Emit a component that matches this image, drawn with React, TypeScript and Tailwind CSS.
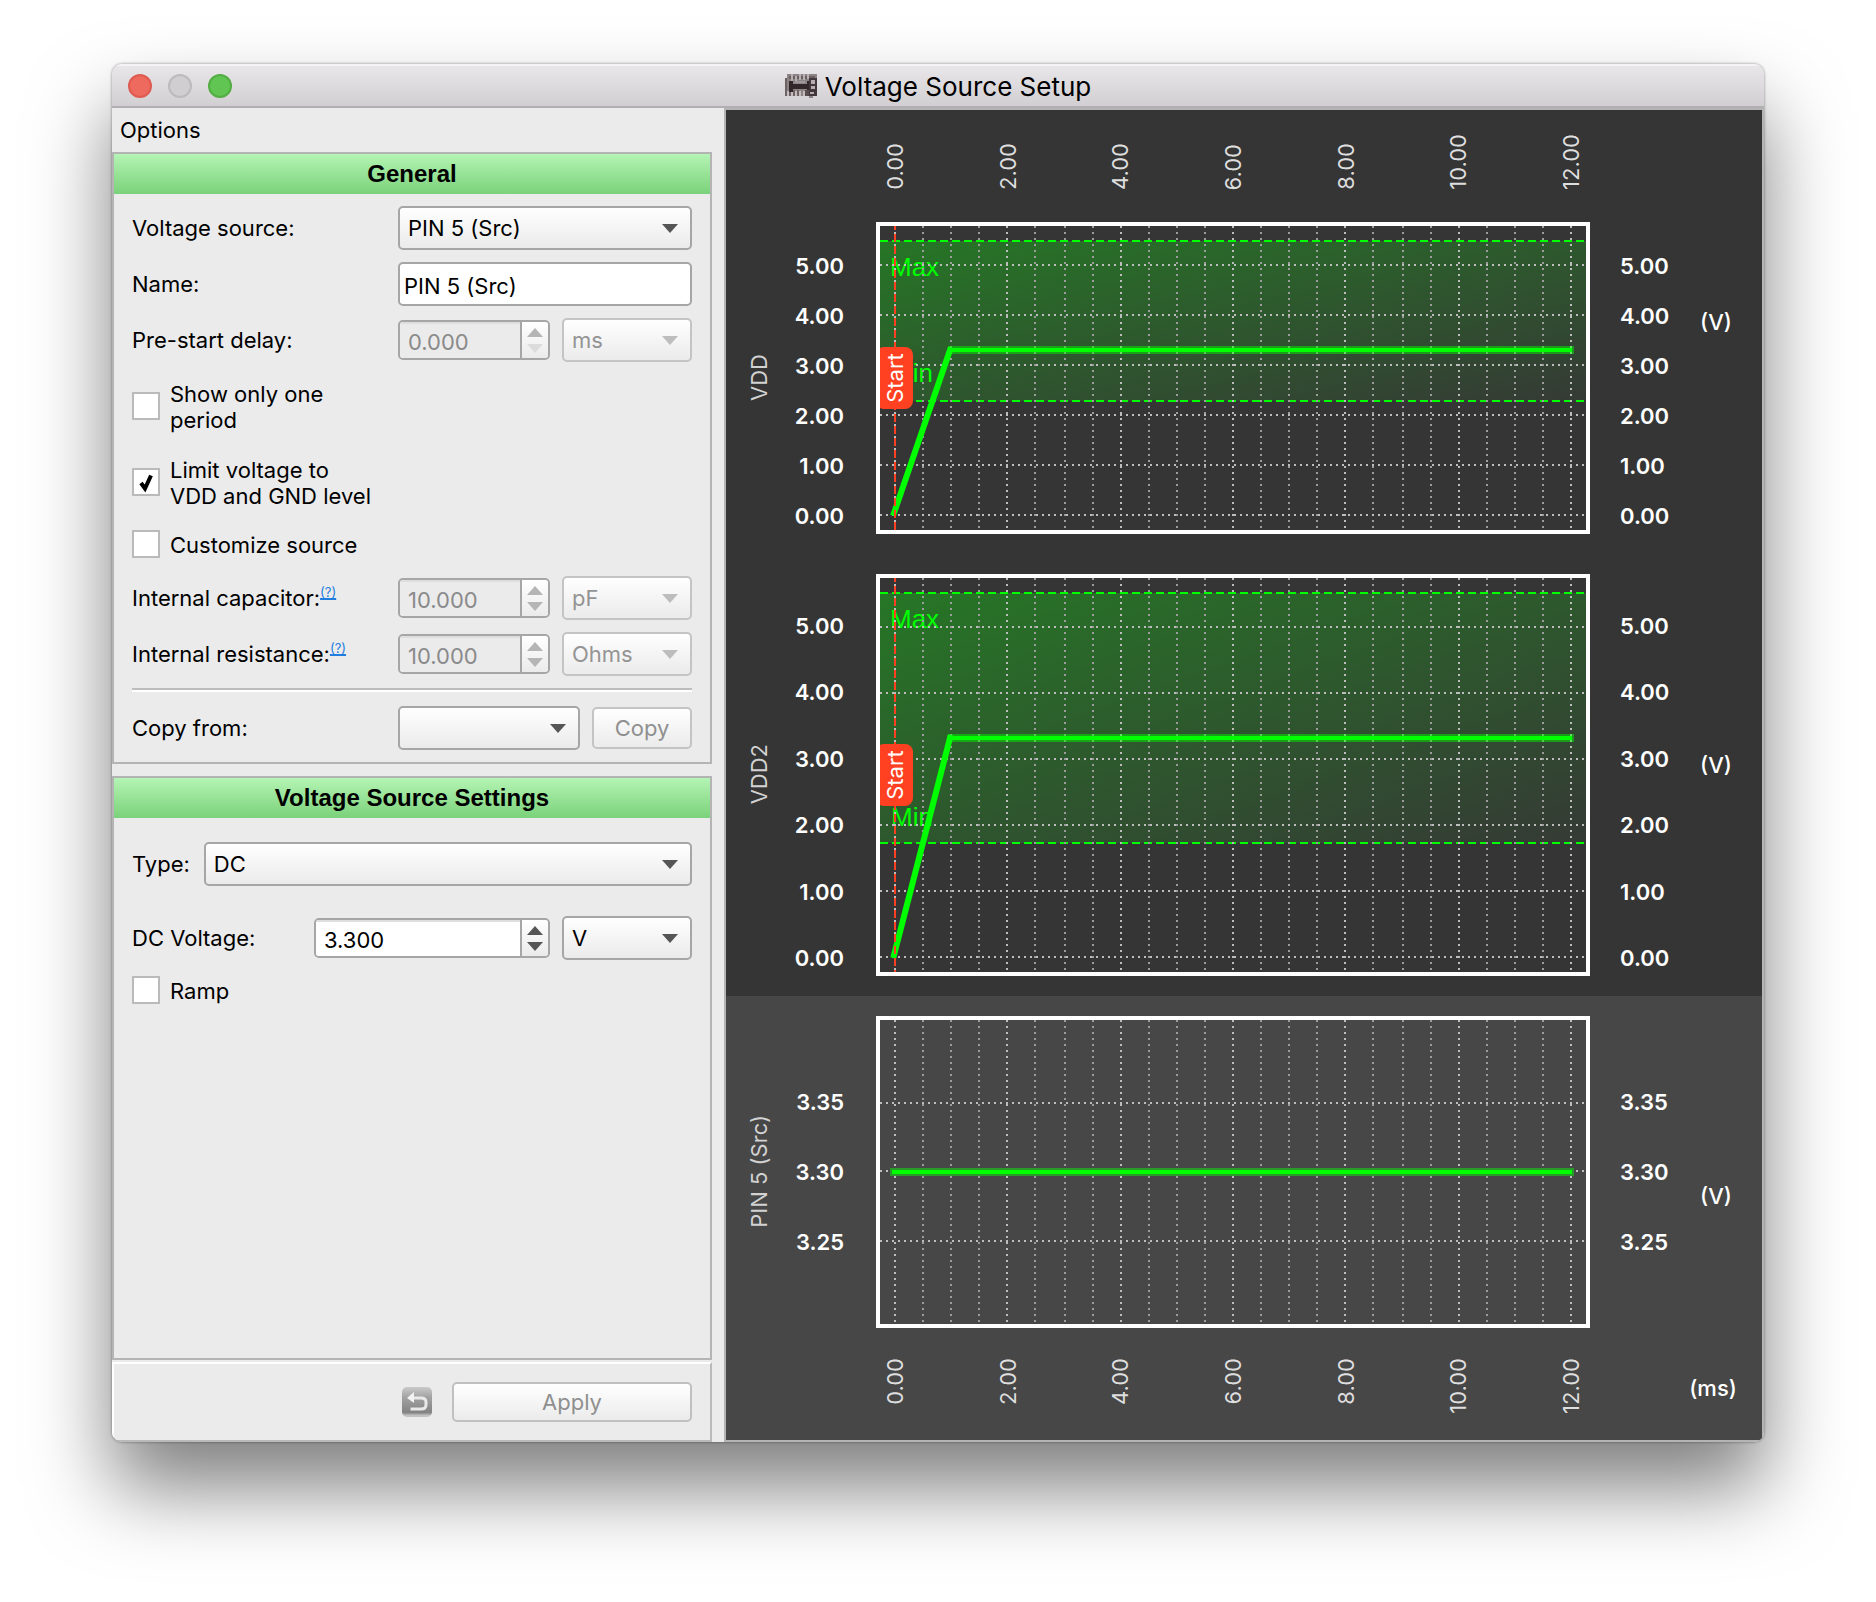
import type { ReactNode } from "react";

const GRID = "#bdbdbd";
const GRID_MINOR = "#9c9c9c";
const GREEN = "#00ff00";
const RED = "#ff4122";
const PLOT_WIDTH = 706;

const pct = (x: number) => `${(x / PLOT_WIDTH) * 100}%`;

function Arrow({ up = false, className = "" }: { up?: boolean; className?: string }) {
  return (
    <svg viewBox="0 0 16 9" aria-hidden="true" className={`h-[9px] w-4 ${className}`} fill="currentColor">
      <path d={up ? "M0 9 8 0l8 9z" : "M0 0h16L8 9z"} />
    </svg>
  );
}

function Combo({
  id,
  label,
  options,
  disabled = false,
  className,
}: {
  id: string;
  label?: string;
  options: string[];
  disabled?: boolean;
  className: string;
}) {
  return (
    <div className={`relative h-11 ${className} ${disabled ? "text-[#949494]" : "text-black"}`}>
      <select
        id={id}
        aria-label={label}
        disabled={disabled}
        className={`h-full w-full appearance-none rounded-[5px] border-2 bg-linear-to-b from-white to-[#ebebeb] pl-2 leading-7 disabled:opacity-100 ${
          disabled ? "border-[#c4c4c4]" : "border-[#a6a6a6]"
        }`}
      >
        {options.map((o) => (
          <option key={o}>{o}</option>
        ))}
      </select>
      <Arrow
        className={`pointer-events-none absolute top-[18px] right-3.5 ${disabled ? "text-[#bdbdbd]" : "text-[#555]"}`}
      />
    </div>
  );
}

function Spin({
  id,
  value,
  disabled = false,
  atMinimum = false,
  className,
}: {
  id: string;
  value: string;
  disabled?: boolean;
  atMinimum?: boolean;
  className: string;
}) {
  return (
    <div className={`flex h-10 overflow-hidden rounded-[5px] border-2 border-[#a6a6a6] ${className}`}>
      <input
        id={id}
        type="text"
        defaultValue={value}
        disabled={disabled}
        className={`min-w-0 flex-1 border-t-2 border-[#dedede] px-2 pt-0.5 leading-7 ${
          disabled ? "bg-[#ebebeb] text-[#8a8a8a]" : "bg-white text-black"
        }`}
      />
      <div
        className={`flex w-7 flex-col items-center justify-center gap-[7px] border-l-2 border-[#a6a6a6] bg-linear-to-b from-white to-[#ebebeb] ${
          disabled ? "text-[#b5b5b5]" : "text-[#555]"
        }`}
      >
        <button type="button" aria-label="Increase" disabled={disabled}>
          <Arrow up className="block" />
        </button>
        <button type="button" aria-label="Decrease" disabled={disabled}>
          <Arrow className={atMinimum ? "block text-[#dcdcdc]" : "block"} />
        </button>
      </div>
    </div>
  );
}

function Check({ children, checked = false }: { children: ReactNode; checked?: boolean }) {
  return (
    <label className="flex items-center gap-2.5 leading-[26px]">
      <span className="relative size-7 shrink-0">
        <input
          type="checkbox"
          defaultChecked={checked}
          className="peer block size-7 appearance-none border-2 border-[#bababa] bg-white"
        />
        <svg
          viewBox="0 0 28 28"
          aria-hidden="true"
          className="pointer-events-none absolute inset-0 hidden size-7 peer-checked:block"
        >
          <path d="M9 15l4 5.500L19 7.500" fill="none" stroke="#000" strokeWidth="4" />
        </svg>
      </span>
      <span className="pt-0.5">{children}</span>
    </label>
  );
}

function Hint() {
  return (
    <a href="#help" className="self-start text-[13px] leading-4 text-[#1f7de0] underline decoration-2">
      (?)
    </a>
  );
}

function Panel({ title, className = "", children }: { title: string; className?: string; children: ReactNode }) {
  return (
    <section className={`border-2 border-[#b4b4b4] ${className}`}>
      <h2 className="h-10 bg-linear-to-b from-[#b4f4b4] to-[#7ad27a] text-center font-['Liberation_Sans',sans-serif] text-2xl leading-10 font-bold">
        {title}
      </h2>
      {children}
    </section>
  );
}

type PlotProps = {
  id: string;
  rows: number[];
  trace: { level: number; base?: number };
  band?: { min: number; maxText: number; minText: number };
  height: number;
  className: string;
};

function Plot({ id, rows, trace, band, height, className }: PlotProps) {
  const columns = Array.from({ length: 25 }, (_, i) => 1 + 2 * Math.round((14 + (i * 169) / 6) / 2));
  const mid = height / 2;
  return (
    <div className={`border-4 border-white ${className}`}>
      <svg className="block h-full w-full overflow-hidden" role="img" aria-label={`${id} waveform`}>
        <defs>
          <linearGradient id={`fill-${id}`} x1="0" y1="0" x2="1" y2="1">
            <stop offset="0" stopColor="#267626" />
            <stop offset="1" stopColor="#353a35" />
          </linearGradient>
        </defs>
        {band && (
          <>
            <rect x="0" y="15" width="100%" height={band.min - 15} fill={`url(#fill-${id})`} />
            <g fill={GREEN} fontFamily="Liberation Sans, sans-serif" fontSize="26">
              <text x="10" y={band.maxText}>
                Max
              </text>
              <text x="11" y={band.minText}>
                Min
              </text>
            </g>
            <g stroke={GREEN} strokeWidth="2" strokeDasharray="8 4" shapeRendering="crispEdges">
              <line x1="0" x2="100%" y1="15" y2="15" />
              <line x1="0" x2="100%" y1={band.min} y2={band.min} />
            </g>
          </>
        )}
        <g strokeWidth="2" strokeDasharray="2 4" shapeRendering="crispEdges">
          {columns.map((x, i) => (
            <line key={x} x1={pct(x)} x2={pct(x)} y1="0" y2="100%" stroke={i % 4 === 0 ? GRID : GRID_MINOR} />
          ))}
          {rows.map((y) => (
            <line key={y} x1="0" x2="100%" y1={y} y2={y} stroke={GRID} />
          ))}
        </g>
        {trace.base !== undefined && (
          <line x1={pct(14)} y1={trace.base} x2={pct(70)} y2={trace.level} stroke={GREEN} strokeWidth="6" strokeLinecap="square" />
        )}
        <g stroke={GREEN}>
          <line
            x1={pct(trace.base === undefined ? 10 : 69)}
            x2={pct(694)}
            y1={trace.level}
            y2={trace.level}
            strokeWidth="8"
            strokeOpacity="0.45"
          />
          <line
            x1={pct(trace.base === undefined ? 12 : 69)}
            x2={pct(692)}
            y1={trace.level}
            y2={trace.level}
            strokeWidth="4"
          />
        </g>
        {band && (
          <>
            <line
              x1={pct(15)}
              x2={pct(15)}
              y1="0"
              y2="100%"
              stroke={RED}
              strokeWidth="2"
              strokeDasharray="8 4"
              strokeDashoffset="4"
              shapeRendering="crispEdges"
            />
            <rect x="-4" y={mid - 31} width="37" height="62" rx="8" fill={RED} />
            <text
              transform={`translate(23 ${mid}) rotate(-90)`}
              textAnchor="middle"
              fill="#fff"
              fontFamily="Inter, sans-serif"
              fontSize="22"
            >
              Start
            </text>
          </>
        )}
      </svg>
    </div>
  );
}

function XTicks({ className }: { className: string }) {
  return (
    <div className={`col-start-3 flex justify-between px-[5px] text-[#dedede] ${className}`}>
      {["0.00", "2.00", "4.00", "6.00", "8.00", "10.00", "12.00"].map((t) => (
        <span key={t} className="w-7 rotate-180 leading-7 [writing-mode:vertical-rl]">
          {t}
        </span>
      ))}
    </div>
  );
}

function YTicks({ labels, className }: { labels: string[]; className: string }) {
  return (
    <div className={`flex flex-col justify-between leading-7 font-semibold text-white ${className}`}>
      {labels.map((t) => (
        <span key={t}>{t}</span>
      ))}
    </div>
  );
}

function TraceName({ children, className }: { children: ReactNode; className: string }) {
  return (
    <div className={`col-start-1 flex items-center justify-center pr-0.5 pb-0.5 text-[#d2d2d2] ${className}`}>
      <span className="rotate-180 leading-7 [writing-mode:vertical-rl]">{children}</span>
    </div>
  );
}

function Unit({ children, className }: { children: ReactNode; className: string }) {
  return (
    <div className={`col-start-5 flex items-center justify-center leading-7 font-medium text-white ${className}`}>
      {children}
    </div>
  );
}

function BoardIcon() {
  return (
    <svg viewBox="0 0 32 24" aria-hidden="true" className="h-6 w-8">
      <rect x="2" width="30" height="22" fill="#8d8486" />
      <path d="M4 2h26v3H4z" fill="#6b6062" />
      <path d="M6 0h2v7H6zM10 2h2v5h-2zM14 0h2v6h-2zM18 0h2v6h-2zM22 0h2v5h-2z" fill="#b7b0b2" />
      <path d="M4 7h4v3h14V7h4v11h-4v-3H8v3H4z" fill="#32272a" />
      <path d="M0 4h2v18H0zM4 18h2v4H4zM8 16h2v6H8zM12 16h2v6h-2z" fill="#6d6264" />
      <path d="M2 17h2v5H2zM6 18h2v4H6zM10 17h2v5h-2zM14 17h2v5h-2zM18 17h2v5h-2z" fill="#c3bdbf" />
      <path d="M24 4h8v18h-8z" fill="#42373a" />
      <path d="M26 6h4v4h-4zM26 12h4v3h-4zM25 18h4v2h-4z" fill="#b5adaf" />
      <path d="M10 7h10v2H10z" fill="#a0979a" />
      <path d="M20 16h4v6h-4z" fill="#584c4f" />
      <path d="M24 22h4v2h-4z" fill="#8d8486" />
    </svg>
  );
}

export default function App() {
  const volts = ["5.00", "4.00", "3.00", "2.00", "1.00", "0.00"];
  const fine = ["3.35", "3.30", "3.25"];
  return (
    <div className="min-h-screen bg-white px-28 pt-16 pb-40 font-['Inter',sans-serif] text-[22px] leading-7 text-black">
      <main className="overflow-hidden rounded-[10px] bg-[#ebebeb] shadow-[0_46px_80px_rgba(0,0,0,0.5),0_0_3px_rgba(0,0,0,0.45)]">
        <header className="grid h-11 grid-cols-[1fr_auto_1fr] items-center border-t-2 border-b-2 border-t-[#f5f4f5] border-b-[#b1afb1] bg-linear-to-b from-[#e8e6e9] to-[#d1cfd2] px-4">
          <div className="flex gap-4">
            <button type="button" aria-label="Close" className="size-6 rounded-full border-2 border-[#de5a50] bg-[#ee6a5f]" />
            <button type="button" aria-label="Minimize" disabled className="size-6 rounded-full border-2 border-[#bcbabc] bg-[#d0ced0]" />
            <button type="button" aria-label="Zoom" className="size-6 rounded-full border-2 border-[#52ad42] bg-[#61c554]" />
          </div>
          <div className="flex items-center gap-2">
            <BoardIcon />
            <h1 className="pt-0.5 text-[26px] leading-8">Voltage Source Setup</h1>
          </div>
        </header>

        <div className="flex">
          <form className="flex w-[612px] shrink-0 flex-col pr-3">
            <nav className="flex h-11 items-center pl-2">
              <button type="button">Options</button>
            </nav>

            <Panel title="General">
              <div className="px-[18px] pt-3 pb-3">
                <div className="flex items-center justify-between">
                  <label htmlFor="source">Voltage source:</label>
                  <Combo id="source" options={["PIN 5 (Src)"]} className="w-[294px]" />
                </div>
                <div className="mt-3 flex items-center justify-between">
                  <label htmlFor="name">Name:</label>
                  <input
                    id="name"
                    type="text"
                    defaultValue="PIN 5 (Src)"
                    className="h-11 w-[294px] rounded-[5px] border-2 border-[#a6a6a6] bg-white px-1 pt-1 leading-7"
                  />
                </div>
                <div className="mt-3 flex items-center">
                  <label htmlFor="delay" className="flex-1">
                    Pre-start delay:
                  </label>
                  <Spin id="delay" value="0.000" disabled atMinimum className="w-[152px]" />
                  <Combo id="delay-unit" label="Delay unit" options={["ms"]} disabled className="ml-3 w-[130px]" />
                </div>

                <div className="mt-[17px] flex flex-col items-start gap-[22px]">
                  <Check>
                    Show only one
                    <br />
                    period
                  </Check>
                  <Check checked>
                    Limit voltage to
                    <br />
                    VDD and GND level
                  </Check>
                </div>
                <div className="mt-[21px] flex">
                  <Check>Customize source</Check>
                </div>

                <div className="mt-[18px] flex items-center">
                  <div className="flex flex-1">
                    <label htmlFor="cap">Internal capacitor:</label>
                    <Hint />
                  </div>
                  <Spin id="cap" value="10.000" disabled className="w-[152px]" />
                  <Combo id="cap-unit" label="Capacitor unit" options={["pF"]} disabled className="ml-3 w-[130px]" />
                </div>
                <div className="mt-3 flex items-center">
                  <div className="flex flex-1">
                    <label htmlFor="res">Internal resistance:</label>
                    <Hint />
                  </div>
                  <Spin id="res" value="10.000" disabled className="w-[152px]" />
                  <Combo id="res-unit" label="Resistance unit" options={["Ohms"]} disabled className="ml-3 w-[130px]" />
                </div>

                <hr className="mt-3 h-1 border-t-2 border-b-2 border-t-[#bcbcbc] border-b-white" />

                <div className="mt-3.5 flex items-center">
                  <label htmlFor="copy-from" className="flex-1">
                    Copy from:
                  </label>
                  <Combo id="copy-from" options={[""]} className="w-[182px]" />
                  <button
                    type="button"
                    disabled
                    className="ml-3 h-[42px] w-[100px] rounded-[5px] border-2 border-[#c4c4c4] bg-linear-to-b from-white to-[#ebebeb] text-[#8f8f8f]"
                  >
                    Copy
                  </button>
                </div>
              </div>
            </Panel>

            <Panel title="Voltage Source Settings" className="mt-3 flex-1">
              <div className="px-[18px] pt-6">
                <div className="flex items-center gap-3.5">
                  <label htmlFor="type">Type:</label>
                  <Combo id="type" options={["DC"]} className="flex-1" />
                </div>
                <div className="mt-[30px] flex items-center">
                  <label htmlFor="dc" className="flex-1">
                    DC Voltage:
                  </label>
                  <Spin id="dc" value="3.300" className="w-[236px]" />
                  <Combo id="dc-unit" label="Voltage unit" options={["V"]} className="ml-3 w-[130px]" />
                </div>
                <div className="mt-4 flex">
                  <Check>Ramp</Check>
                </div>
              </div>
            </Panel>

            <footer className="mt-0.5 flex items-center justify-end gap-5 border-2 border-t-white border-r-[#bababa] border-b-[#bababa] border-l-white py-[18px] pr-[18px]">
              <button type="button" aria-label="Revert" className="size-[30px]">
                <svg viewBox="0 0 30 30" aria-hidden="true" className="block size-full">
                  <defs>
                    <linearGradient id="revert" x1="0" y1="0" x2="0" y2="1">
                      <stop offset="0" stopColor="#cacaca" />
                      <stop offset="0.35" stopColor="#a2a2a2" />
                      <stop offset="0.85" stopColor="#838383" />
                      <stop offset="0.95" stopColor="#c2c2c2" />
                    </linearGradient>
                  </defs>
                  <rect width="30" height="30" rx="5" fill="url(#revert)" />
                  <path d="M10 11h9q5 0 5 4v3q0 4-5 4H8.500" fill="none" stroke="#e9e9e9" strokeWidth="3" />
                  <path d="M5 11l7-6v11z" fill="#f2f2f2" />
                </svg>
              </button>
              <button
                type="button"
                disabled
                className="h-10 w-60 rounded-[5px] border-2 border-[#c0c0c0] bg-linear-to-b from-white to-[#ebebeb] text-[#8f8f8f]"
              >
                Apply
              </button>
            </footer>
          </form>

          <div className="min-w-0 flex-1 border-2 border-[#b4b4b4]">
            <section className="grid grid-cols-[68px_82px_1fr_80px_92px] grid-rows-[112px_auto_40px_auto_20px] bg-[#353535]">
              <XTicks className="row-start-1 items-end pb-8" />
              <TraceName className="row-start-2">VDD</TraceName>
              <YTicks labels={volts} className="col-start-2 row-start-2 pt-[30px] pr-8 pb-1 text-right" />
              <Plot
                id="VDD"
                className="col-start-3 row-start-2 h-[312px]"
                height={304}
                rows={[39, 89, 139, 189, 239, 289]}
                trace={{ level: 124, base: 287 }}
                band={{ min: 175, maxText: 50, minText: 156 }}
              />
              <YTicks labels={volts} className="col-start-4 row-start-2 pt-[30px] pb-1 pl-[30px]" />
              <Unit className="row-span-2 row-start-1">(V)</Unit>

              <TraceName className="row-start-4">VDD2</TraceName>
              <YTicks labels={volts} className="col-start-2 row-start-4 pt-[38px] pr-8 pb-1 text-right" />
              <Plot
                id="VDD2"
                className="col-start-3 row-start-4 h-[402px]"
                height={394}
                rows={[49, 115, 181, 247, 313, 379]}
                trace={{ level: 160, base: 377 }}
                band={{ min: 265, maxText: 50, minText: 248 }}
              />
              <YTicks labels={volts} className="col-start-4 row-start-4 pt-[38px] pb-1 pl-[30px]" />
              <Unit className="row-span-3 row-start-3">(V)</Unit>
            </section>

            <section className="grid grid-cols-[68px_82px_1fr_80px_92px] grid-rows-[20px_auto_112px] bg-[#474747]">
              <TraceName className="row-start-2">PIN 5 (Src)</TraceName>
              <YTicks labels={fine} className="col-start-2 row-start-2 py-[72px] pr-8 text-right" />
              <Plot
                id="PIN5"
                className="col-start-3 row-start-2 h-[312px]"
                height={304}
                rows={[83, 151, 221]}
                trace={{ level: 152 }}
              />
              <YTicks labels={fine} className="col-start-4 row-start-2 py-[72px] pl-[30px]" />
              <Unit className="row-span-2 row-start-1 pt-17">(V)</Unit>
              <XTicks className="row-start-3 items-start pt-[30px]" />
              <Unit className="row-start-3 pt-2 pr-1.5">(ms)</Unit>
            </section>
          </div>
        </div>
      </main>
    </div>
  );
}
